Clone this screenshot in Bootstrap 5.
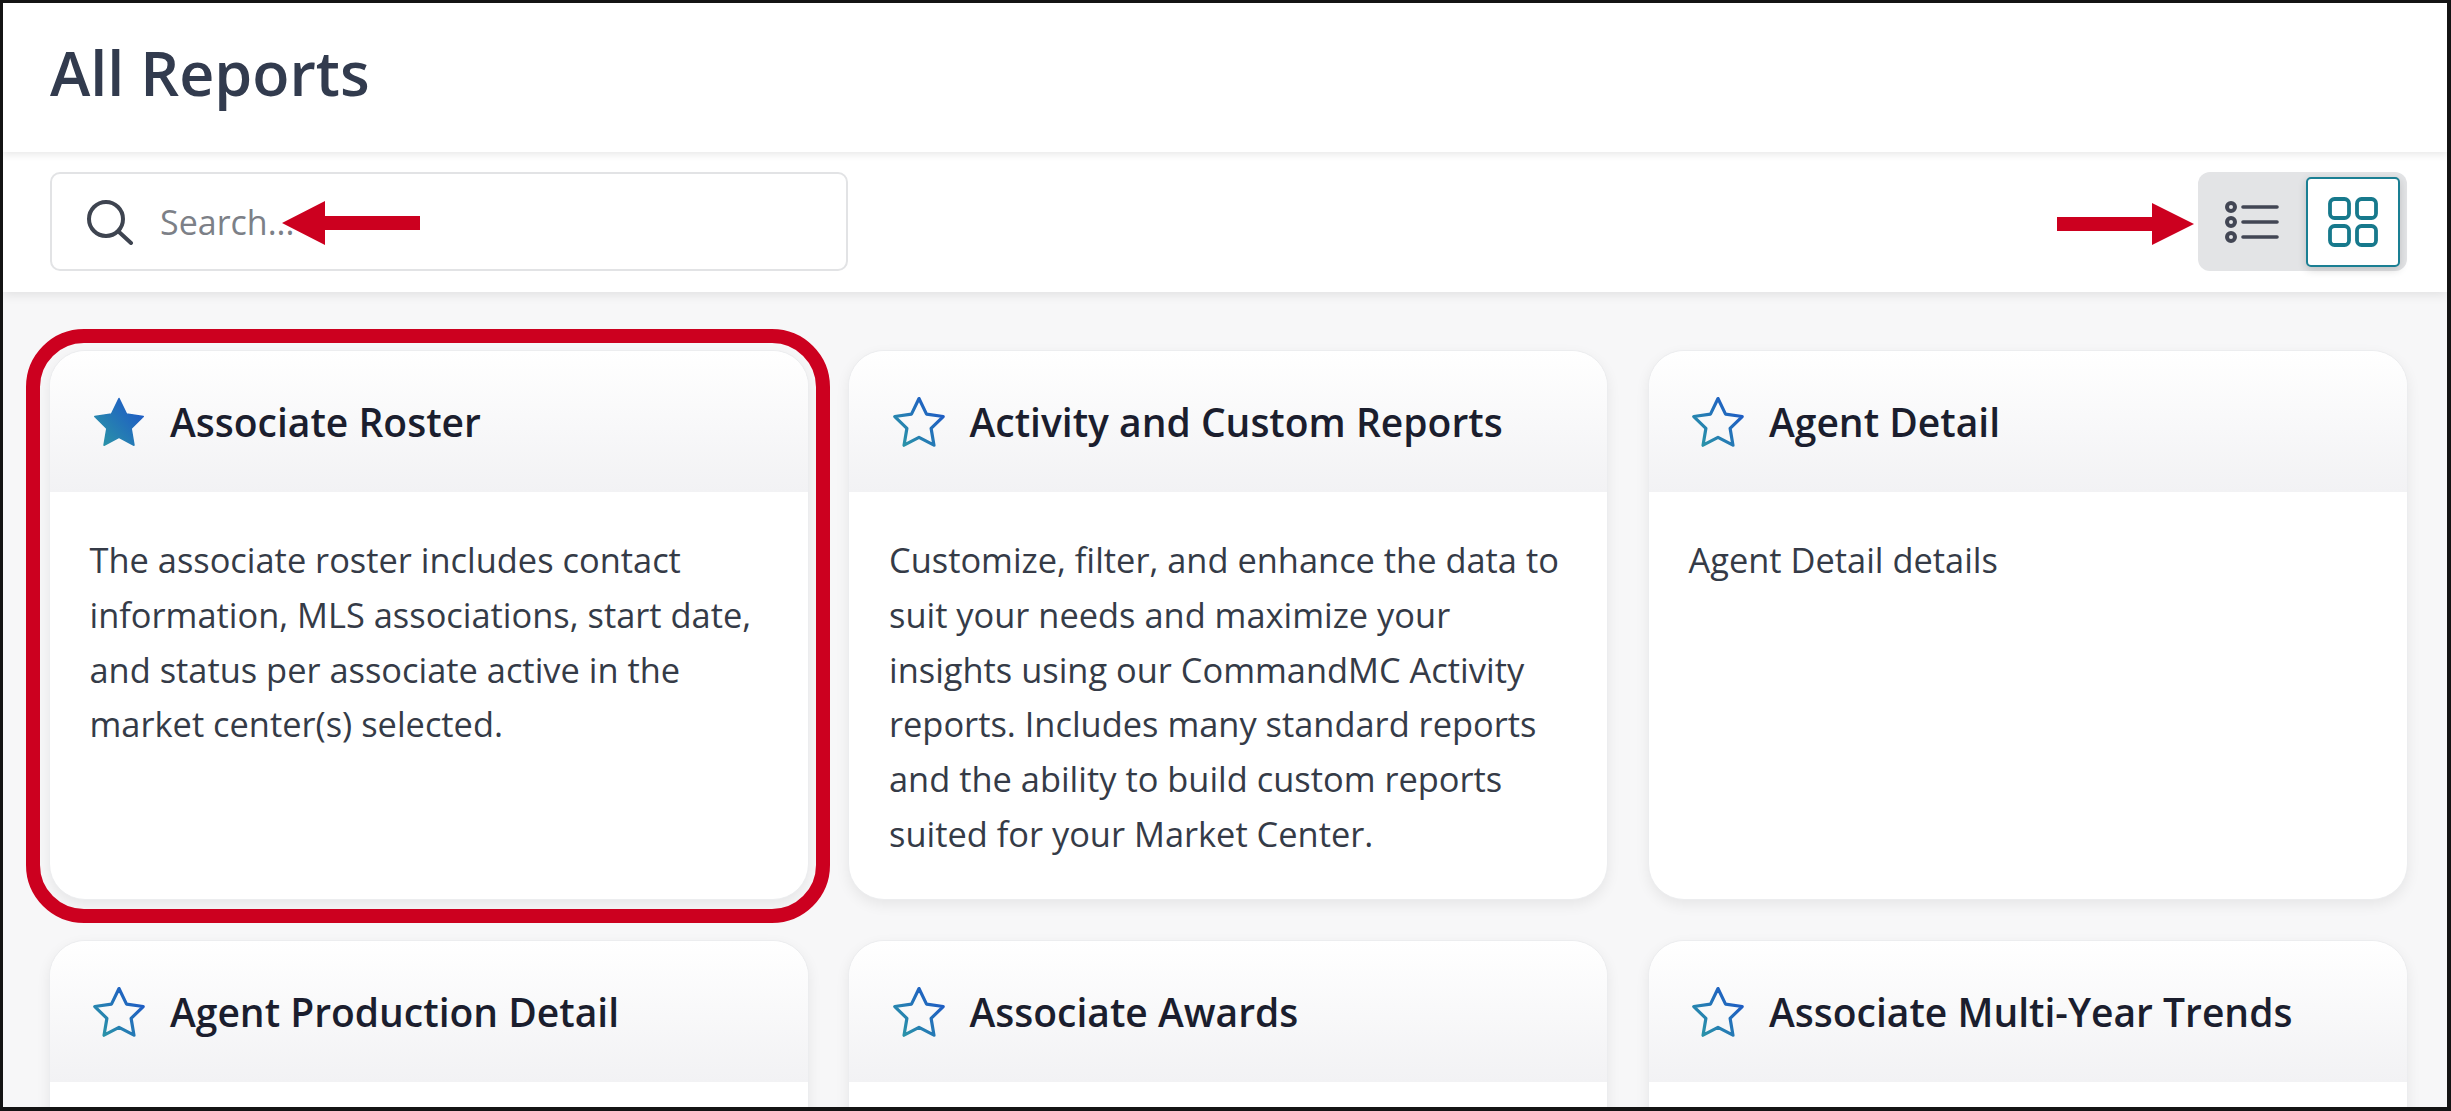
<!doctype html>
<html lang="en">
<head>
<meta charset="utf-8">
<title>All Reports</title>
<link href="https://cdn.jsdelivr.net/npm/bootstrap@5.3.0/dist/css/bootstrap.min.css" rel="stylesheet">
<style>
html,body{height:100%;}
body{margin:0;overflow:hidden;font-family:"Open Sans","Liberation Sans",sans-serif;background:#f7f7f8;}
.shot{height:1111px;border:3px solid #141414;border-right-width:4px;border-bottom-width:4px;overflow:hidden;background:#f7f7f8;}
.title-band{height:149px;background:#fff;padding:0 0 10px 47px;box-shadow:0 2px 8px rgba(0,0,0,.1);position:relative;z-index:2;}
.page-title{font-size:61px;font-weight:600;color:#323b4e;margin:0;}
.tool-band{height:140px;background:#fff;padding:20px 40px 21px 47px;box-shadow:0 3px 10px rgba(0,0,0,.09);position:relative;z-index:1;}
.search-box{width:798px;height:99px;border:2px solid #e2e3e5;border-radius:10px;padding-left:34px;background:#fff;position:relative;}
.search-box svg{flex:none;}
.search-box input{border:0;outline:0;background:transparent;font-family:inherit;font-size:34px;color:#333;padding:2px 0 0;margin-left:26px;width:500px;box-shadow:none;}
.search-box input::placeholder{color:#7c8087;opacity:1;}
.search-arrow{position:absolute;left:230px;top:27px;width:138px;height:44px;}
.toggle-group{position:relative;width:209px;height:99px;background:#e3e4e6;border-radius:12px;padding:5px 7px 4px 0;}
.toggle-arrow{position:absolute;right:100%;margin-right:4px;top:31px;width:137px;height:42px;}
.toggle-opt{width:108px;}
.toggle-on{width:94px;background:#fff;border:2px solid #1a7f93;border-radius:5px;box-shadow:0 3px 8px rgba(0,0,0,.16);}
.report-grid{display:grid;grid-template-columns:760px 760px 760px;column-gap:39.5px;row-gap:40px;padding:58px 0 0 45.5px;}
.report-card{height:550px;background:#fff;border:1px solid #ecedef;border-radius:36px;box-shadow:0 5px 14px rgba(0,0,0,.07);position:relative;overflow:visible;}
.report-head{height:141px;padding:2px 0 0 42.5px;border-radius:36px 36px 0 0;background:linear-gradient(#fff,#f2f2f4);gap:24px;}
.report-head .star{margin-top:-2px;}
.report-name{font-size:39px;font-weight:600;color:#1b1e2e;margin:0;}
.report-text{padding:41px 40px 40px;font-size:34.4px;line-height:54.8px;color:#353b47;margin:0;}
.ring{position:absolute;left:-24px;right:-22px;top:-22px;bottom:-24px;border:14px solid #cc001f;border-radius:58px;pointer-events:none;}
.star{width:54px;height:51px;flex:none;}
</style>
</head>
<body>
<svg width="0" height="0" class="d-block">
<defs>
<linearGradient id="sg" gradientUnits="userSpaceOnUse" x1="5" y1="20" x2="20" y2="7">
<stop offset="0" stop-color="#2a93a8"/><stop offset="1" stop-color="#1e5cc4"/>
</linearGradient>
</defs>
</svg>
<div class="shot">
  <header class="title-band d-flex align-items-center">
    <h1 class="page-title">All Reports</h1>
  </header>
  <div class="tool-band d-flex justify-content-between">
    <div class="search-box d-flex align-items-center">
      <svg width="48" height="46" viewBox="0 0 48 46" fill="none" stroke="#3e4450" stroke-width="4" stroke-linecap="round"><circle cx="20" cy="20" r="17"/><path d="M32.5 32.5 45 44"/></svg>
      <input class="form-control" type="text" placeholder="Search...">
      <svg class="search-arrow" viewBox="0 0 138 44"><path fill="#cc001f" d="M0 22 43 0V15H138V29H43V44Z"/></svg>
    </div>
    <div class="toggle-group d-flex">
      <svg class="toggle-arrow" viewBox="0 0 137 42"><path fill="#cc001f" d="M0 14H95V0L137 21 95 42V28H0Z"/></svg>
      <div class="toggle-opt d-flex align-items-center justify-content-center">
        <svg width="54" height="44" viewBox="0 0 54 44" fill="none" stroke="#424654" stroke-linecap="round"><g stroke-width="4"><circle cx="6" cy="7" r="4"/><circle cx="6" cy="22" r="4"/><circle cx="6" cy="37" r="4"/></g><path stroke-width="3.6" d="M18 7H52M18 22H52M18 37H52"/></svg>
      </div>
      <div class="toggle-on d-flex align-items-center justify-content-center">
        <svg width="50" height="50" viewBox="0 0 50 50" fill="none" stroke="#17798c" stroke-width="3.8"><rect x="2" y="2" width="19" height="19" rx="4.5"/><rect x="29" y="2" width="19" height="19" rx="4.5"/><rect x="2" y="29" width="19" height="19" rx="4.5"/><rect x="29" y="29" width="19" height="19" rx="4.5"/></svg>
      </div>
    </div>
  </div>
  <main class="report-grid">
    <article class="report-card">
      <div class="report-head d-flex align-items-center">
        <svg class="star" viewBox="1.5 1.5 21 20"><path fill="url(#sg)" stroke="url(#sg)" stroke-width=".6" stroke-linejoin="round" d="M12 2.5l2.95 6.1 6.55.95-4.75 4.65 1.12 6.6L12 17.7l-5.87 3.1 1.12-6.6L2.5 9.55l6.55-.95z"/></svg>
        <h2 class="report-name">Associate Roster</h2>
      </div>
      <p class="report-text">The associate roster includes contact<br>information, MLS associations, start date,<br>and status per associate active in the<br>market center(s) selected.</p>
      <div class="ring"></div>
    </article>
    <article class="report-card">
      <div class="report-head d-flex align-items-center">
        <svg class="star" viewBox="1.5 1.5 21 20"><path fill="none" stroke="url(#sg)" stroke-width="1.25" stroke-linejoin="round" d="M12 2.5l2.95 6.1 6.55.95-4.75 4.65 1.12 6.6L12 17.7l-5.87 3.1 1.12-6.6L2.5 9.55l6.55-.95z"/></svg>
        <h2 class="report-name">Activity and Custom Reports</h2>
      </div>
      <p class="report-text">Customize, filter, and enhance the data to<br>suit your needs and maximize your<br>insights using our CommandMC Activity<br>reports. Includes many standard reports<br>and the ability to build custom reports<br>suited for your Market Center.</p>
    </article>
    <article class="report-card">
      <div class="report-head d-flex align-items-center">
        <svg class="star" viewBox="1.5 1.5 21 20"><path fill="none" stroke="url(#sg)" stroke-width="1.25" stroke-linejoin="round" d="M12 2.5l2.95 6.1 6.55.95-4.75 4.65 1.12 6.6L12 17.7l-5.87 3.1 1.12-6.6L2.5 9.55l6.55-.95z"/></svg>
        <h2 class="report-name">Agent Detail</h2>
      </div>
      <p class="report-text">Agent Detail details</p>
    </article>
    <article class="report-card">
      <div class="report-head d-flex align-items-center">
        <svg class="star" viewBox="1.5 1.5 21 20"><path fill="none" stroke="url(#sg)" stroke-width="1.25" stroke-linejoin="round" d="M12 2.5l2.95 6.1 6.55.95-4.75 4.65 1.12 6.6L12 17.7l-5.87 3.1 1.12-6.6L2.5 9.55l6.55-.95z"/></svg>
        <h2 class="report-name">Agent Production Detail</h2>
      </div>
    </article>
    <article class="report-card">
      <div class="report-head d-flex align-items-center">
        <svg class="star" viewBox="1.5 1.5 21 20"><path fill="none" stroke="url(#sg)" stroke-width="1.25" stroke-linejoin="round" d="M12 2.5l2.95 6.1 6.55.95-4.75 4.65 1.12 6.6L12 17.7l-5.87 3.1 1.12-6.6L2.5 9.55l6.55-.95z"/></svg>
        <h2 class="report-name">Associate Awards</h2>
      </div>
    </article>
    <article class="report-card">
      <div class="report-head d-flex align-items-center">
        <svg class="star" viewBox="1.5 1.5 21 20"><path fill="none" stroke="url(#sg)" stroke-width="1.25" stroke-linejoin="round" d="M12 2.5l2.95 6.1 6.55.95-4.75 4.65 1.12 6.6L12 17.7l-5.87 3.1 1.12-6.6L2.5 9.55l6.55-.95z"/></svg>
        <h2 class="report-name">Associate Multi-Year Trends</h2>
      </div>
    </article>
  </main>
</div>
<script src="https://cdn.jsdelivr.net/npm/bootstrap@5.3.0/dist/js/bootstrap.bundle.min.js"></script>
</body>
</html>
